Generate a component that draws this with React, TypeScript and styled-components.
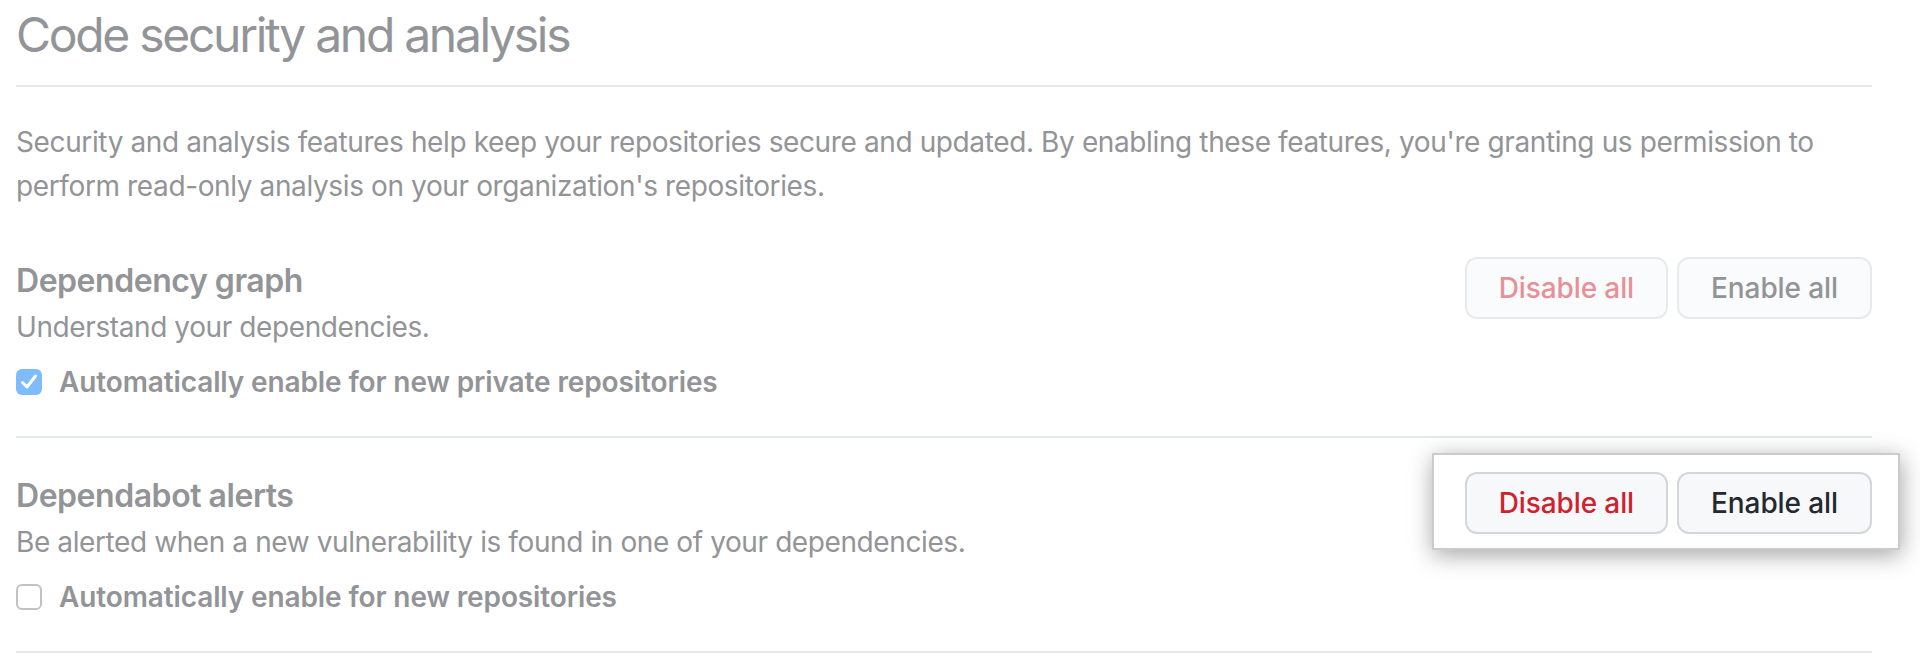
import React from "react";
import styled, { createGlobalStyle, css } from "styled-components";

const GlobalStyle = createGlobalStyle`
  html, body { margin: 0; padding: 0; background: #ffffff; }
  body {
    font-family: Inter, "Noto Sans", sans-serif;
    -webkit-font-smoothing: antialiased;
  }
`;

const Page = styled.div`
  padding: 0 48px 0 16px;
  color: #929497;
`;

const Subhead = styled.div`
  padding-bottom: 16px;
  border-bottom: 2px solid #e6e9ec;
`;

const Heading = styled.h2`
  margin: 0;
  font-size: 48px;
  font-weight: 400;
  line-height: 69px;
  letter-spacing: -2.3px;
`;

const Intro = styled.p`
  margin: 33px 0 15px;
  font-size: 28px;
  line-height: 44px;
  letter-spacing: -0.38px;
`;

const Section = styled.section`
  display: flex;
  justify-content: space-between;
  align-items: flex-start;
  padding: 34px 0 32px;
  border-bottom: 2px solid #e6e9ec;
`;

const Info = styled.div`
  display: flex;
  flex-direction: column;
`;

const FeatureTitle = styled.h3`
  margin: 0;
  font-size: 32px;
  font-weight: 600;
  line-height: 48px;
  letter-spacing: -0.46px;
`;

const FeatureDesc = styled.p`
  margin: 0;
  font-size: 28px;
  line-height: 44px;
  letter-spacing: -0.4px;
`;

const CheckRow = styled.label`
  display: flex;
  align-items: center;
  gap: 17px;
  margin-top: 11px;
  font-size: 28px;
  font-weight: 600;
  line-height: 44px;
  letter-spacing: -0.12px;
`;

const CheckBox = styled.span<{ $checked?: boolean }>`
  display: inline-flex;
  align-items: center;
  justify-content: center;
  width: 26px;
  height: 26px;
  box-sizing: border-box;
  border-radius: 6px;
  ${(p) =>
    p.$checked
      ? css`
          background: #7fbcff;
        `
      : css`
          background: #ffffff;
          border: 2px solid #c2c2c2;
        `}
`;

const ButtonGroup = styled.div<{ $highlight?: boolean }>`
  display: flex;
  gap: 9px;
  flex-shrink: 0;
  ${(p) =>
    p.$highlight &&
    css`
      background: #ffffff;
      border: 2px solid #cbcbcb;
      padding: 17px 26px 14px 31px;
      margin: -19px -28px -16px -33px;
      box-shadow: 1px 5px 22px rgba(0, 0, 0, 0.36);
    `}
`;

const Button = styled.button<{ $danger?: boolean; $dim?: boolean }>`
  height: 62px;
  padding: 0 32px;
  box-sizing: border-box;
  border-radius: 12px;
  font-family: Inter, "Noto Sans", sans-serif;
  font-size: 28px;
  font-weight: 500;
  line-height: 1;
  letter-spacing: -0.1px;
  cursor: pointer;
  border: 2px solid ${(p) => (p.$dim ? "#e8eaec" : "#d3d6da")};
  background: ${(p) => (p.$dim ? "#fafbfc" : "#f6f8fa")};
  color: ${(p) =>
    p.$danger
      ? p.$dim
        ? "#e79097"
        : "#cf222e"
      : p.$dim
      ? "#929497"
      : "#24292f"};
`;

const Check = () => (
  <svg width="20" height="20" viewBox="0 0 20 20" aria-hidden="true">
    <path
      d="M3.5 10.5 L8 15 L16.5 4"
      fill="none"
      stroke="#ffffff"
      strokeWidth="3"
      strokeLinecap="round"
      strokeLinejoin="round"
    />
  </svg>
);

type Feature = {
  title: string;
  desc: string;
  label: string;
  checked: boolean;
  highlight: boolean;
};

const features: Feature[] = [
  {
    title: "Dependency graph",
    desc: "Understand your dependencies.",
    label: "Automatically enable for new private repositories",
    checked: true,
    highlight: false,
  },
  {
    title: "Dependabot alerts",
    desc: "Be alerted when a new vulnerability is found in one of your dependencies.",
    label: "Automatically enable for new repositories",
    checked: false,
    highlight: true,
  },
];

export default function App() {
  return (
    <>
      <GlobalStyle />
      <Page>
        <Subhead>
          <Heading>Code security and analysis</Heading>
        </Subhead>
        <Intro>
          Security and analysis features help keep your repositories secure and
          updated. By enabling these features, you're granting us permission to
          perform read-only analysis on your organization's repositories.
        </Intro>
        {features.map((f) => (
          <Section key={f.title}>
            <Info>
              <FeatureTitle>{f.title}</FeatureTitle>
              <FeatureDesc>{f.desc}</FeatureDesc>
              <CheckRow>
                <CheckBox $checked={f.checked}>{f.checked && <Check />}</CheckBox>
                {f.label}
              </CheckRow>
            </Info>
            <ButtonGroup $highlight={f.highlight}>
              <Button $danger $dim={!f.highlight}>
                Disable all
              </Button>
              <Button $dim={!f.highlight}>Enable all</Button>
            </ButtonGroup>
          </Section>
        ))}
      </Page>
    </>
  );
}
